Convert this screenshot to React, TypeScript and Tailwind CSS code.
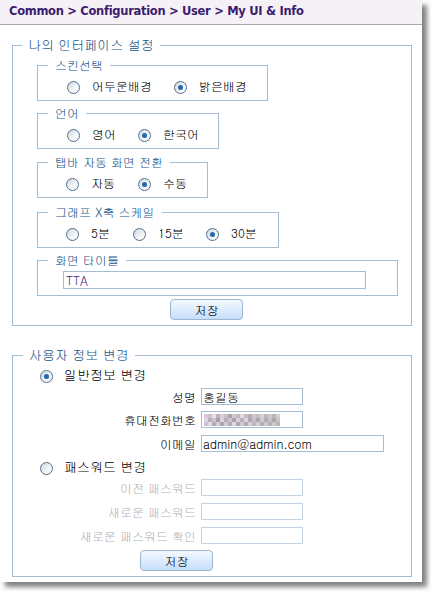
import React from 'react';

const KR = "font-['Gulim','Noto_Sans_CJK_KR',sans-serif]";

// mosaic colours for the blurred phone number
const MOSAIC = [
  ['#d9c4dc', '#c7c3cf', '#eadbe8', '#b9b4bc', '#dccbd8', '#c4c0c4', '#a8a4b0', '#d5c6d6', '#bfbac1', '#e0dce0', '#c9bcc9', '#b5b0b5', '#d2c5d0', '#c1bdc1', '#d8d2d6', '#bcb7bc', '#cfc9cc', '#b9b5ba', '#d3cfd2'],
  ['#e4d5e3', '#b6aeb9', '#d0c0d4', '#a39ea8', '#e1d2de', '#b3aeb7', '#cfc1d3', '#a8a2ab', '#d9ccdb', '#b7b2b9', '#dfd2dc', '#aea9b0', '#c8bcc8', '#aba7ae', '#d4cad2', '#b0acb1', '#c6bdc5', '#aaa7ab', '#cbc3ca'],
  ['#cfbfd4', '#e2dde2', '#b3a9bb', '#d7cad9', '#aca6b2', '#d6cad8', '#b2abb8', '#e2d7e0', '#aba6b5', '#d1c6d4', '#b1acb4', '#dacedb', '#bdb7bf', '#d6ccd3', '#b4afb5', '#d0c7ce', '#b6b1b6', '#cfc7cd', '#b9b4b9'],
];

function Radio({ checked = false }: { checked?: boolean }) {
  return (
    <span className="w-[13px] h-[13px] rounded-full border border-[#4f6f8f] bg-gradient-to-br from-[#cfd6dd] via-[#eef1f3] to-[#ffffff] flex items-center justify-center shrink-0">
      {checked && <span className="w-[5px] h-[5px] rounded-full bg-[#2368ad]" />}
    </span>
  );
}

function Option({ label, checked, width }: { label: string; checked?: boolean; width: string }) {
  return (
    <div className={`flex items-start gap-[12px] ${width}`}>
      <span className="mt-[2px]"><Radio checked={checked} /></span>
      <span className="text-[12px] leading-[14px] text-black">{label}</span>
    </div>
  );
}

function SubSet({ title, width, mt, children }: { title: string; width: string; mt: string; children: React.ReactNode }) {
  return (
    <fieldset className={`${width} ${mt} ml-[24px] border border-[#a3bdd4] pb-[5px]`}>
      <legend className="ml-[10px] px-[7px] text-[12px] leading-[16px] text-[#21578a]">{title}</legend>
      {children}
    </fieldset>
  );
}

function SaveButton({ ml }: { ml: string }) {
  return (
    <button className={`${ml} w-[73px] h-[21px] rounded-[4px] border border-[#9cb6cf] bg-gradient-to-b from-[#f4f9ff] to-[#c6dffa] text-[12px] leading-[18px] text-black`}>
      저장
    </button>
  );
}

function Field({ label, value, width = 'w-[102px]', disabled, mt, children }: { label: string; value?: string; width?: string; disabled?: boolean; mt: string; children?: React.ReactNode }) {
  return (
    <div className={`flex items-center ${mt}`}>
      <span className={`w-[183px] text-right text-[12px] leading-[14px] ${disabled ? 'text-[#b2b2b2]' : 'text-black'}`}>{label}</span>
      <div className={`ml-[5px] ${width} h-[17px] border ${disabled ? 'border-[#c7d5e2]' : 'border-[#a3bdd4]'} bg-white flex items-center px-[1px] text-[12px] leading-[14px] text-black overflow-hidden`}>
        {children ?? value}
      </div>
    </div>
  );
}

export default function App() {
  return (
    <div className={`w-[431px] h-[591px] bg-white ${KR}`}>
      <div className="w-[422px] h-[582px] bg-white shadow-[5px_5px_5px_rgba(0,0,0,0.5)] flex flex-col">
        {/* Breadcrumb header */}
        <div className="h-[25px] shrink-0 bg-[#f6f1f6] border-b border-[#a9a9a9] flex items-center pl-[9px]">
          <span className="font-['DejaVu_Sans',sans-serif] font-bold text-[11.5px] tracking-[-0.3px] text-[#3b1c6d]">
            Common &gt; Configuration &gt; User &gt; My UI &amp; Info
          </span>
        </div>

        {/* My interface settings */}
        <fieldset className="mt-[12px] ml-[12px] w-[400px] border border-[#a3bdd4] pb-[5px]">
          <legend className="ml-[9px] px-[6px] text-[13px] leading-[16px] text-[#21578a]">나의 인터페이스 설정</legend>

          <SubSet title="스킨선택" width="w-[231px]" mt="mt-[4px]">
            <div className="flex pl-[29px] pt-[6px] h-[22px]">
              <Option label="어두운배경" width="w-[107px]" />
              <Option label="밝은배경" checked width="w-[80px]" />
            </div>
          </SubSet>

          <SubSet title="언어" width="w-[182px]" mt="mt-[4px]">
            <div className="flex pl-[29px] pt-[6px] h-[22px]">
              <Option label="영어" width="w-[71px]" />
              <Option label="한국어" checked width="w-[70px]" />
            </div>
          </SubSet>

          <SubSet title="탭바 자동 화면 전환" width="w-[171px]" mt="mt-[5px]">
            <div className="flex pl-[28px] pt-[6px] h-[22px]">
              <Option label="자동" width="w-[72px]" />
              <Option label="수동" checked width="w-[60px]" />
            </div>
          </SubSet>

          <SubSet title="그래프 X축 스케일" width="w-[242px]" mt="mt-[6px]">
            <div className="flex pl-[28px] pt-[6px] h-[22px]">
              <Option label="5분" width="w-[67px]" />
              <Option label="15분" width="w-[73px]" />
              <Option label="30분" checked width="w-[60px]" />
            </div>
          </SubSet>

          <SubSet title="화면 타이틀" width="w-[361px]" mt="mt-[4px]">
            <div className="pl-[25px] pt-[3px] pb-[1px]">
              <div className="w-[303px] h-[18px] border border-[#a3bdd4] flex items-center px-[2px] text-[12px] leading-[14px] text-[#4a1f7e]">
                TTA
              </div>
            </div>
          </SubSet>

          <div className="mt-[3px] flex">
            <SaveButton ml="ml-[157px]" />
          </div>
        </fieldset>

        {/* User info */}
        <fieldset className="mt-[21px] ml-[12px] w-[400px] border border-[#a3bdd4] pb-[5px]">
          <legend className="ml-[10px] px-[6px] text-[13px] leading-[16px] text-[#21578a]">사용자 정보 변경</legend>

          <div className="flex items-start gap-[11px] ml-[27px] mt-[5px] h-[16px]">
            <span className="mt-[2px]"><Radio checked /></span>
            <span className="text-[13px] leading-[14px] text-black">일반정보 변경</span>
          </div>

          <Field label="성명" value="홍길동" mt="mt-[4px]" />
          <Field label="휴대전화번호" mt="mt-[6px]">
            <div className="flex flex-col ml-[1px]">
              {MOSAIC.map((row, r) => (
                <div key={r} className="flex">
                  {row.map((c, i) => (
                    <span key={i} className="w-[4px] h-[4px]" style={{ backgroundColor: c }} />
                  ))}
                </div>
              ))}
            </div>
          </Field>
          <Field label="이메일" value="admin@admin.com" width="w-[183px]" mt="mt-[7px]" />

          <div className="flex items-start gap-[11px] ml-[27px] mt-[8px] h-[16px]">
            <span className="mt-[2px]"><Radio /></span>
            <span className="text-[13px] leading-[14px] text-black">패스워드 변경</span>
          </div>

          <Field label="이전 패스워드" disabled mt="mt-[3px]" />
          <Field label="새로운 패스워드" disabled mt="mt-[7px]" />
          <Field label="새로운 패스워드 확인" disabled mt="mt-[7px]" />

          <div className="mt-[6px] flex">
            <SaveButton ml="ml-[127px]" />
          </div>
        </fieldset>
      </div>
    </div>
  );
}
